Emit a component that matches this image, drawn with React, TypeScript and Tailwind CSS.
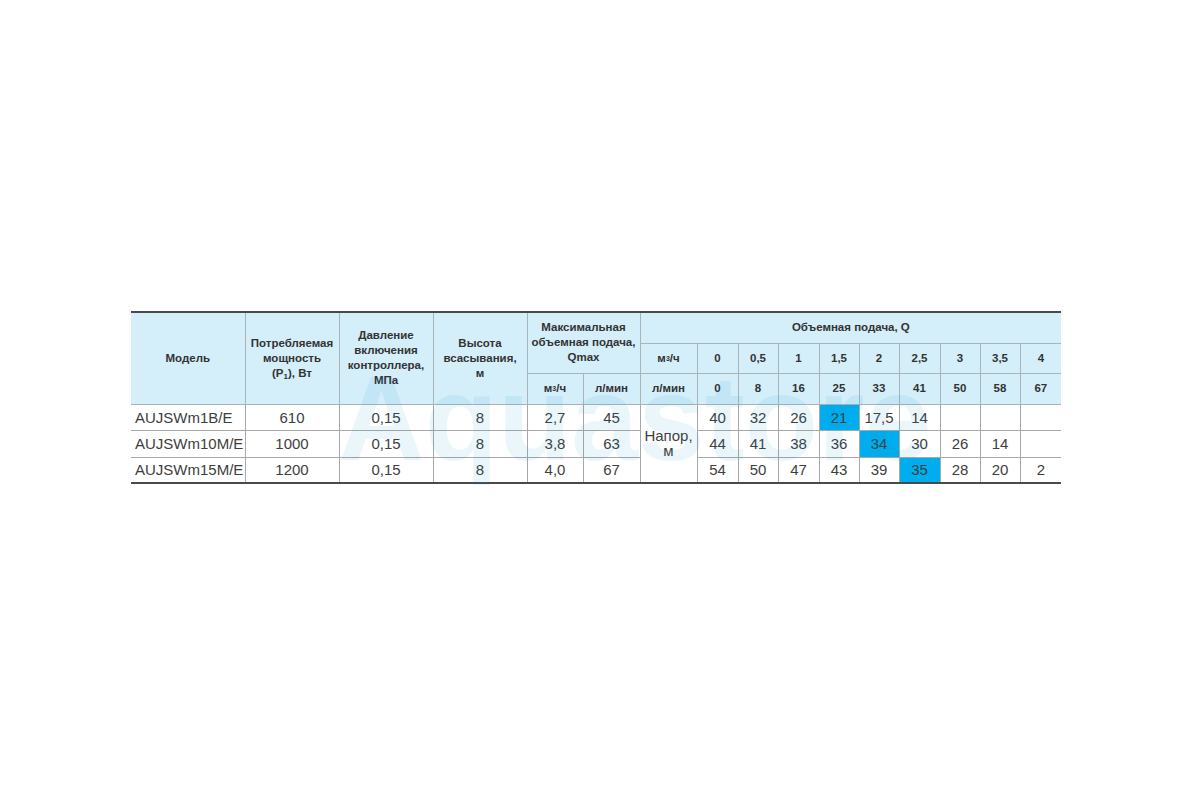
// Pump performance table — AUJSWm series, with the faint store watermark over it.

const COLS = [114, 94, 94, 94, 56, 57, 57, 41, 40, 41, 40, 40, 41, 40, 40, 41];

const Q_M3 = ["0", "0,5", "1", "1,5", "2", "2,5", "3", "3,5", "4"];
const Q_LMIN = ["0", "8", "16", "25", "33", "41", "50", "58", "67"];

type Row = {
  model: string;
  power: string;
  pressure: string;
  suction: string;
  qm3: string;
  qlmin: string;
  head: string[];
  hit: number; // index of the highlighted head value
};

const ROWS: Row[] = [
  { model: "AUJSWm1B/E", power: "610", pressure: "0,15", suction: "8", qm3: "2,7", qlmin: "45", head: ["40", "32", "26", "21", "17,5", "14", "", "", ""], hit: 3 },
  { model: "AUJSWm10M/E", power: "1000", pressure: "0,15", suction: "8", qm3: "3,8", qlmin: "63", head: ["44", "41", "38", "36", "34", "30", "26", "14", ""], hit: 4 },
  { model: "AUJSWm15M/E", power: "1200", pressure: "0,15", suction: "8", qm3: "4,0", qlmin: "67", head: ["54", "50", "47", "43", "39", "35", "28", "20", "2"], hit: 5 },
];

const HEIGHTS = ["h-[26px]", "h-[27px]", "h-[26px]"];

const th = "border border-[#a9b4ba] bg-[#d4eefa] px-0 text-center align-middle text-[11.5px] font-bold leading-[15px] text-[#333]";
const td = "border border-[#a8a8a8] p-0 text-center align-middle text-[15px] leading-none text-[#3e3e3e]";

const M3 = () => (
  <>
    м<sup className="relative -top-[1px] text-[7px]">3</sup>/ч
  </>
);

export default function App() {
  return (
    <div className="min-h-screen w-full bg-white pl-[131px] pt-[311px]" style={{ fontFamily: '"Liberation Sans", Arial, sans-serif' }}>
      <div className="relative w-[930px]">
        <table className="w-[930px] table-fixed border-collapse border-y-2 border-y-[#4a4a4a]">
          <colgroup>
            {COLS.map((w, i) => (
              <col key={i} style={{ width: w }} />
            ))}
          </colgroup>
          <thead>
            <tr className="h-[31px]">
              <th rowSpan={3} className={`${th} border-l-0`}>Модель</th>
              <th rowSpan={3} className={th}>
                Потребляемая<br />мощность<br />(P<sub className="text-[8px]">1</sub>), Вт
              </th>
              <th rowSpan={3} className={th}>
                Давление<br />включения<br />контроллера,<br />МПа
              </th>
              <th rowSpan={3} className={th}>
                Высота<br />всасывания,<br />м
              </th>
              <th rowSpan={2} colSpan={2} className={th}>
                Максимальная<br />объемная подача,<br />Qmax
              </th>
              <th colSpan={10} className={`${th} border-r-0`}>Объемная подача, Q</th>
            </tr>
            <tr className="h-[30px]">
              <th className={th}><M3 /></th>
              {Q_M3.map((q, i) => (
                <th key={q} className={`${th} ${i === Q_M3.length - 1 ? "border-r-0" : ""}`}>{q}</th>
              ))}
            </tr>
            <tr className="h-[31px]">
              <th className={th}><M3 /></th>
              <th className={th}>л/мин</th>
              <th className={th}>л/мин</th>
              {Q_LMIN.map((q, i) => (
                <th key={q} className={`${th} ${i === Q_LMIN.length - 1 ? "border-r-0" : ""}`}>{q}</th>
              ))}
            </tr>
          </thead>
          <tbody>
            {ROWS.map((r, ri) => (
              <tr key={r.model} className={HEIGHTS[ri]}>
                <td className={`${td} border-l-0 pl-1 text-left`}>{r.model}</td>
                <td className={td}>{r.power}</td>
                <td className={td}>{r.pressure}</td>
                <td className={td}>{r.suction}</td>
                <td className={td}>{r.qm3}</td>
                <td className={td}>{r.qlmin}</td>
                {ri === 0 && (
                  <td rowSpan={3} className={`${td} leading-[22px]`}>
                    Напор,<br />м
                  </td>
                )}
                {r.head.map((h, i) => (
                  <td
                    key={i}
                    className={`${td} ${i === r.hit ? "bg-[#00aeef]" : ""} ${i === r.head.length - 1 ? "border-r-0" : ""}`}
                  >
                    {h}
                  </td>
                ))}
              </tr>
            ))}
          </tbody>
        </table>

        {/* watermark */}
        <div className="pointer-events-none absolute left-[207px] top-[47px] select-none whitespace-nowrap text-[120px] font-bold leading-none text-[#008cd2]/[0.08]">
          Aquastore
        </div>
      </div>
    </div>
  );
}
